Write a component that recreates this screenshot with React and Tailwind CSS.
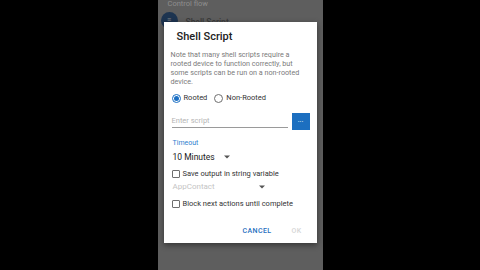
import React from "react";

function Radio({ checked, label }) {
  return (
    <div className="flex items-center gap-[3px]">
      <span
        className={`w-[9px] h-[9px] rounded-full border flex items-center justify-center ${
          checked ? "border-[#1a6fc4]" : "border-[#6f6f6f]"
        }`}
      >
        {checked && <span className="w-[5px] h-[5px] rounded-full bg-[#1a6fc4]" />}
      </span>
      <span className="text-[7.5px] text-[#333]">{label}</span>
    </div>
  );
}

function Check({ label }) {
  return (
    <div className="h-[12px] flex items-center gap-[3px] pl-[1px]">
      <span className="w-[8px] h-[8px] rounded-[1px] border border-[#6f6f6f]" />
      <span className="text-[7.5px] text-[#333]">{label}</span>
    </div>
  );
}

function Caret() {
  return (
    <svg width="6" height="4" viewBox="0 0 6 4">
      <path d="M0 0.5 L6 0.5 L3 3.5 Z" fill="#555" />
    </svg>
  );
}

export default function App() {
  return (
    <div
      className="w-[480px] h-[270px] bg-black flex justify-center overflow-hidden"
      style={{ fontFamily: "Roboto, 'Liberation Sans', sans-serif" }}
    >
      <div className="w-[165px] h-full bg-[#5e5e5e] relative overflow-hidden">
        {/* dimmed list behind the dialog */}
        <div className="pl-[10px] text-[7.5px] leading-[8px] text-[#8e8e8e]">Control flow</div>
        <div className="flex items-center gap-[8px] pl-[3px] mt-[4px]">
          <div className="w-[17px] h-[17px] rounded-full bg-[#1d3450] flex items-center justify-center">
            <span className="text-[7px] text-[#8a8a8a]">≡</span>
          </div>
          <span className="text-[8.5px] text-[#3a3a3a] font-medium mt-[4px]">Shell Script</span>
        </div>

        {/* dialog */}
        <div className="absolute left-[6px] top-[22px] w-[153px] h-[221px] bg-white shadow-[0_2px_6px_rgba(0,0,0,0.45)] flex flex-col pl-[7px] pr-[7px]">
          <div className="mt-[8px] h-[14px] leading-[14px] pl-[6px] text-[11px] font-medium text-[#212121]">
            Shell Script
          </div>
          <p className="mt-[6px] text-[7.2px] leading-[9px] text-[#7a7a7a]">
            Note that many shell scripts require a rooted device to function correctly, but some scripts can be run on a non-rooted device.
          </p>
          <div className="mt-[6px] h-[12px] flex items-center gap-[7px] pl-[1px]">
            <Radio checked label="Rooted" />
            <Radio label="Non-Rooted" />
          </div>
          <div className="mt-[9px] h-[17px] flex items-stretch gap-[4px] pl-[1px]">
            <div className="w-[116px] flex flex-col justify-end">
              <div className="text-[7.5px] text-[#b5b5b5] leading-[9px]">Enter script</div>
              <div className="h-[1px] bg-[#9a9a9a] mt-[2px] mb-[2px]" />
            </div>
            <div className="w-[18px] bg-[#1c6fc0] flex items-center justify-center text-white text-[7px] leading-none pb-[2px]">
              ...
            </div>
          </div>
          <div className="mt-[8px] h-[10px] leading-[10px] pl-[2px] text-[7px] text-[#2f7fcf]">Timeout</div>
          <div className="mt-[3px] h-[12px] flex items-center gap-[9px] pl-[2px]">
            <span className="text-[8.5px] text-[#212121]">10 Minutes</span>
            <Caret />
          </div>
          <div className="mt-[5px]">
            <Check label="Save output in string variable" />
          </div>
          <div className="mt-[1px] h-[12px] flex items-center gap-[44px] pl-[2px]">
            <span className="text-[8px] text-[#c4c4c4]">AppContact</span>
            <Caret />
          </div>
          <div className="mt-[5px]">
            <Check label="Block next actions until complete" />
          </div>
          <div className="mt-[15px] h-[12px] flex items-center justify-end gap-[20px] pr-[8px]">
            <span className="text-[7px] font-medium tracking-[0.4px] text-[#1f6fc0]">CANCEL</span>
            <span className="text-[7px] font-medium tracking-[0.4px] text-[#d6d6d6]">OK</span>
          </div>
        </div>
      </div>
    </div>
  );
}
